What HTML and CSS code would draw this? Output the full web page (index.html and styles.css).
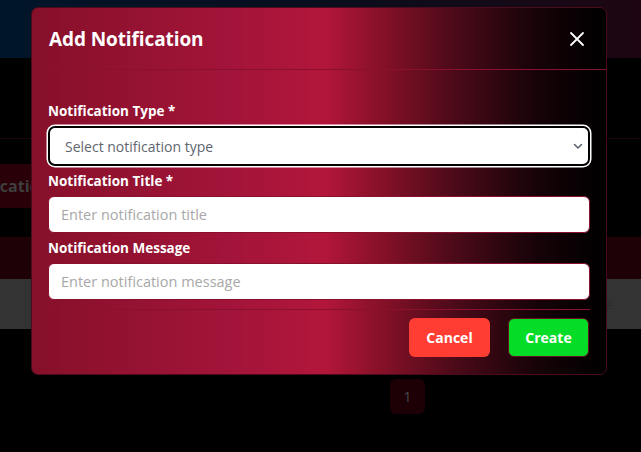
FILE: index.html
```html
<!DOCTYPE html>
<html>
<head>
    <title>Notifications</title>
    <link rel="stylesheet" href="styles.css">
</head>
<body>
    <!-- page behind the dialog -->
    <div class="topbar"></div>
    <div class="toolbar"></div>
    <div class="tabs">
        <button class="tab">Notifications</button>
    </div>
    <div class="table-head"></div>
    <div class="table-row"><span class="row-text">Active</span></div>
    <div class="pager">
        <span class="page-num">1</span>
    </div>

    <!-- add notification dialog -->
    <div class="modal">
        <div class="modal-header">
            <h2>Add Notification</h2>
            <button class="close-btn" aria-label="Close">
                <svg width="16" height="16" viewBox="0 0 16 16">
                    <path d="M2 2 L14 14 M14 2 L2 14" stroke="#fff" stroke-width="1.8" stroke-linecap="round"/>
                </svg>
            </button>
        </div>

        <div class="modal-body">
            <div class="field">
                <label>Notification Type *</label>
                <div class="select-wrap">
                    <select class="select-box">
                        <option>Select notification type</option>
                    </select>
                    <svg class="chevron" width="10" height="7" viewBox="0 0 10 7">
                        <path d="M1.5 1.5 L5 5 L8.5 1.5" fill="none" stroke="#5b6470" stroke-width="1.6" stroke-linecap="round" stroke-linejoin="round"/>
                    </svg>
                </div>
            </div>
            <div class="field">
                <label>Notification Title *</label>
                <input type="text" placeholder="Enter notification title">
            </div>
            <div class="field">
                <label>Notification Message</label>
                <input type="text" placeholder="Enter notification message">
            </div>
        </div>

        <div class="modal-footer">
            <button class="btn btn-cancel">Cancel</button>
            <button class="btn btn-create">Create</button>
        </div>
    </div>
</body>
</html>
```

FILE: styles.css
```css
body {
    margin: 0;
    height: 452px;
    overflow: hidden;
    background: #000;
    font-family: "Open Sans", Arial, sans-serif;
    position: relative;
}

.topbar {
    height: 58px;
    background: linear-gradient(90deg, #00152a 0%, #0a0d1c 55%, #1e0612 100%);
}

.toolbar {
    height: 80px;
    border-bottom: 1px solid #1c0509;
}

.tabs {
    margin-top: 25px;
    display: flex;
}

.tab {
    margin-left: -62px;
    height: 44px;
    padding: 0 16px;
    border: none;
    border-radius: 6px;
    background: #2a0008;
    color: #3e3e3e;
    font-family: inherit;
    font-weight: 700;
    font-size: 16px;
}

.table-head {
    margin-top: 29px;
    height: 42px;
    background: #1e0007;
}

.table-row {
    height: 50px;
    background: #333;
    display: flex;
    align-items: center;
    justify-content: flex-end;
    padding-right: 29px;
}

.row-text {
    color: #2a2a2a;
    font-size: 13px;
}

.pager {
    margin-top: 50px;
    padding-left: 390px;
}

.page-num {
    display: flex;
    align-items: center;
    justify-content: center;
    width: 35px;
    height: 35px;
    border-radius: 6px;
    background: #1c0005;
    color: #4a4a4a;
    font-size: 14px;
}

/* dialog */
.modal {
    position: absolute;
    top: 7px;
    left: 31px;
    width: 574px;
    border: 1px solid #4a0c1c;
    border-radius: 7px;
    background: linear-gradient(90deg, #861029 0%, #a3143a 35%, #b3163b 51%, #8a1129 60%, #4a0a18 74%, #160308 88%, #000 100%);
    color: #fff;
}

.modal-header {
    height: 61px;
    padding: 0 17px;
    display: flex;
    align-items: center;
    justify-content: space-between;
    border-bottom: 1px solid #8a1030;
}

.modal-header h2 {
    margin: 0;
    font-size: 19px;
    font-weight: 700;
    letter-spacing: -0.1px;
}

.close-btn {
    background: none;
    border: none;
    padding: 0;
    width: 16px;
    height: 16px;
    margin-right: 4px;
    cursor: pointer;
}

.modal-body {
    padding: 31px 16px 9px;
}

.field {
    margin-bottom: 5px;
}

.field:last-child {
    margin-bottom: 0;
}

label {
    display: block;
    margin-bottom: 4px;
    font-size: 13.5px;
    font-weight: 700;
    line-height: 21px;
    color: #fff;
}

.select-wrap {
    position: relative;
}

.select-box {
    width: 100%;
    height: 40px;
    padding: 0 15px;
    border: 2px solid #000;
    border-radius: 7px;
    box-shadow: 0 0 0 1.5px #fff;
    background: #fff;
    color: #5f6670;
    font-family: inherit;
    font-size: 14px;
    appearance: none;
    box-sizing: border-box;
}

.chevron {
    position: absolute;
    right: 7px;
    top: 17px;
}

input[type="text"] {
    width: 100%;
    height: 37px;
    padding: 0 12px;
    border: 1px solid #8a1030;
    border-radius: 6px;
    background: #fff;
    font-family: inherit;
    font-size: 14.5px;
    box-sizing: border-box;
}

input::placeholder {
    color: #a8a8a8;
}

.modal-footer {
    margin: 0 16px;
    padding: 8px 0 17px;
    border-top: 1px solid #8a1030;
    display: flex;
    justify-content: flex-end;
    gap: 18px;
}

.btn {
    height: 39px;
    border: none;
    border-radius: 6px;
    color: #fff;
    font-family: inherit;
    font-size: 14px;
    font-weight: 700;
    cursor: pointer;
}

.btn-cancel {
    width: 81px;
    background: #ff3d33;
}

.btn-create {
    width: 81px;
    margin-right: 1px;
    background: #05dc28;
    border: 1px solid #6a0c20;
}
```
